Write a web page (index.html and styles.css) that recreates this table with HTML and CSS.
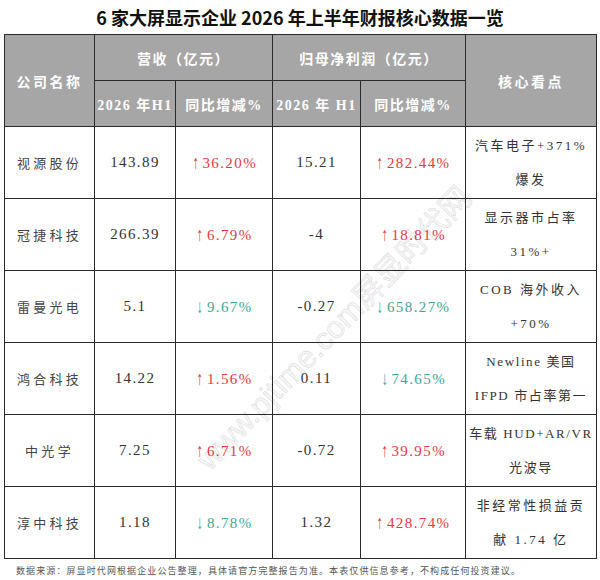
FILE: index.html
```html
<!DOCTYPE html>
<html lang="zh-CN">
<head>
<meta charset="utf-8">
<title>6 家大屏显示企业 2026 年上半年财报核心数据一览</title>
<link rel="stylesheet" href="styles.css">
</head>
<body>
<div class="page">
  <h1 class="title">6 家大屏显示企业 2026 年上半年财报核心数据一览</h1>
  <table class="report">
    <colgroup>
      <col class="w-name"><col class="w-rev"><col class="w-revp"><col class="w-np"><col class="w-npp"><col class="w-note">
    </colgroup>
    <thead>
      <tr class="hrow">
        <th rowspan="2" class="sp">公司名称</th>
        <th colspan="2">营收（亿元）</th>
        <th colspan="2">归母净利润（亿元）</th>
        <th rowspan="2" class="sp">核心看点</th>
      </tr>
      <tr class="hrow">
        <th>2026 年H1</th>
        <th>同比增减%</th>
        <th>2026 年 H1</th>
        <th>同比增减%</th>
      </tr>
    </thead>
    <tbody>
      <tr>
        <td class="name">视源股份</td>
        <td class="num">143.89</td>
        <td class="num up"><span class="ar">↑</span>36.20%</td>
        <td class="num">15.21</td>
        <td class="num up"><span class="ar">↑</span>282.44%</td>
        <td class="note">汽车电子+371%<br>爆发</td>
      </tr>
      <tr>
        <td class="name">冠捷科技</td>
        <td class="num">266.39</td>
        <td class="num up"><span class="ar">↑</span>6.79%</td>
        <td class="num">-4</td>
        <td class="num up"><span class="ar">↑</span>18.81%</td>
        <td class="note">显示器市占率<br>31%+</td>
      </tr>
      <tr>
        <td class="name">雷曼光电</td>
        <td class="num">5.1</td>
        <td class="num down"><span class="ar">↓</span>9.67%</td>
        <td class="num">-0.27</td>
        <td class="num down"><span class="ar">↓</span>658.27%</td>
        <td class="note">COB 海外收入<br>+70%</td>
      </tr>
      <tr>
        <td class="name">鸿合科技</td>
        <td class="num">14.22</td>
        <td class="num up"><span class="ar">↑</span>1.56%</td>
        <td class="num">0.11</td>
        <td class="num down"><span class="ar">↓</span>74.65%</td>
        <td class="note tight">Newline 美国<br>IFPD 市占率第一</td>
      </tr>
      <tr>
        <td class="name">中光学</td>
        <td class="num">7.25</td>
        <td class="num up"><span class="ar">↑</span>6.71%</td>
        <td class="num">-0.72</td>
        <td class="num up"><span class="ar">↑</span>39.95%</td>
        <td class="note tight">车载 HUD+AR/VR<br>光波导</td>
      </tr>
      <tr>
        <td class="name">淳中科技</td>
        <td class="num">1.18</td>
        <td class="num down"><span class="ar">↓</span>8.78%</td>
        <td class="num">1.32</td>
        <td class="num up"><span class="ar">↑</span>428.74%</td>
        <td class="note">非经常性损益贡<br>献 1.74 亿</td>
      </tr>
    </tbody>
  </table>
  <p class="source">数据来源：屏显时代网根据企业公告整理，具体请官方完整报告为准。本表仅供信息参考，不构成任何投资建议。</p>
  <div class="watermark">www.pjtime.com屏显时代网</div>
</div>
</body>
</html>
```

FILE: styles.css
```css
html, body {
  margin: 0;
  padding: 0;
  background: #ffffff;
}

.page {
  position: relative;
  width: 600px;
  height: 580px;
  overflow: hidden;
  font-family: "Liberation Serif", "Noto Sans CJK SC", serif;
  color: #333333;
}

.title {
  margin: 0;
  height: 34px;
  line-height: 34px;
  text-align: center;
  font-family: "Noto Sans CJK SC", "Noto Sans", sans-serif;
  font-size: 18px;
  font-weight: 700;
  color: #111111;
  letter-spacing: 0;
}

.report {
  margin-left: 4px;
  width: 592px;
  border-collapse: collapse;
  table-layout: fixed;
}

.w-name { width: 90px; }
.w-rev { width: 81px; }
.w-revp { width: 97px; }
.w-np { width: 88px; }
.w-npp { width: 105px; }
.w-note { width: 131px; }

.report th,
.report td {
  border: 1px solid #2a2a2a;
  padding: 0;
  text-align: center;
  vertical-align: middle;
  white-space: nowrap;
}

.report th {
  background: #a6a6a6;
  color: #ffffff;
  font-family: "Liberation Serif", "Noto Sans CJK SC", serif;
  font-weight: 700;
  font-size: 14px;
  letter-spacing: 1.5px;
}

.report th.sp {
  letter-spacing: 2.5px;
}

.hrow {
  height: 46px;
}

.report tbody tr {
  height: 72px;
}

.name {
  font-family: "Noto Sans CJK SC", sans-serif;
  font-size: 13px;
  letter-spacing: 3.3px;
  color: #444444;
}

.num {
  font-size: 15px;
  letter-spacing: 1.4px;
  color: #333333;
}

.up {
  color: #e8383d;
}

.down {
  color: #3fa598;
}

.ar {
  display: inline-block;
  font-family: "Liberation Sans", sans-serif;
  font-size: 19px;
  line-height: 1;
  margin-right: 2px;
  letter-spacing: 0;
  transform: scaleX(0.7);
  vertical-align: -1px;
}

.note {
  font-size: 13px;
  line-height: 34px;
  letter-spacing: 2.5px;
  color: #333333;
}

.note.tight {
  letter-spacing: 1.6px;
}

.source {
  margin: 0;
  padding-left: 16px;
  height: 22px;
  line-height: 24px;
  font-family: "Noto Sans CJK SC", sans-serif;
  font-size: 9px;
  letter-spacing: 1.1px;
  color: #555555;
}

.watermark {
  position: absolute;
  left: 332px;
  top: 326px;
  transform: translate(-50%, -50%) rotate(-46deg);
  white-space: nowrap;
  font-family: "Liberation Sans", "Noto Sans CJK SC", sans-serif;
  font-size: 31px;
  color: rgba(0, 0, 0, 0.03);
  -webkit-text-stroke: 0.8px rgba(0, 0, 0, 0.14);
  pointer-events: none;
}
```
